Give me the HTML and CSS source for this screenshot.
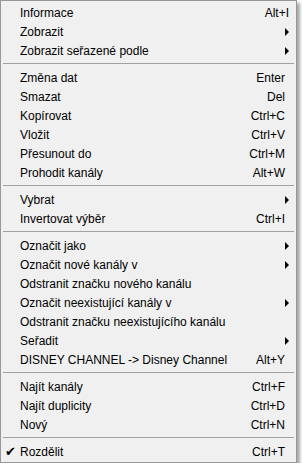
FILE: index.html
```html
<!DOCTYPE html>
<html lang="cs">
<head>
<meta charset="utf-8">
<link rel="stylesheet" href="styles.css">
</head>
<body>
<div class="menu">
  <div class="item"><span class="label">Informace</span><span class="key key-wide">Alt+I</span></div>
  <div class="item"><span class="label">Zobrazit</span><span class="sub"></span></div>
  <div class="item"><span class="label">Zobrazit seřazené podle</span><span class="sub"></span></div>
  <div class="sep"></div>
  <div class="item"><span class="label">Změna dat</span><span class="key">Enter</span></div>
  <div class="item"><span class="label">Smazat</span><span class="key">Del</span></div>
  <div class="item"><span class="label">Kopírovat</span><span class="key">Ctrl+C</span></div>
  <div class="item"><span class="label">Vložit</span><span class="key">Ctrl+V</span></div>
  <div class="item"><span class="label">Přesunout do</span><span class="key">Ctrl+M</span></div>
  <div class="item"><span class="label">Prohodit kanály</span><span class="key">Alt+W</span></div>
  <div class="sep"></div>
  <div class="item"><span class="label">Vybrat</span><span class="sub"></span></div>
  <div class="item"><span class="label">Invertovat výběr</span><span class="key">Ctrl+I</span></div>
  <div class="sep"></div>
  <div class="item"><span class="label">Označit jako</span><span class="sub"></span></div>
  <div class="item"><span class="label">Označit nové kanály v</span><span class="sub"></span></div>
  <div class="item"><span class="label">Odstranit značku nového kanálu</span></div>
  <div class="item"><span class="label">Označit neexistující kanály v</span><span class="sub"></span></div>
  <div class="item"><span class="label">Odstranit značku neexistujícího kanálu</span></div>
  <div class="item"><span class="label">Seřadit</span><span class="sub"></span></div>
  <div class="item"><span class="label">DISNEY CHANNEL -&gt; Disney Channel</span><span class="key">Alt+Y</span></div>
  <div class="sep"></div>
  <div class="item"><span class="label">Najít kanály</span><span class="key">Ctrl+F</span></div>
  <div class="item"><span class="label">Najít duplicity</span><span class="key">Ctrl+D</span></div>
  <div class="item"><span class="label">Nový</span><span class="key">Ctrl+N</span></div>
  <div class="sep"></div>
  <div class="item checked"><span class="check">✔</span><span class="label">Rozdělit</span><span class="key">Ctrl+T</span></div>
</div>
</body>
</html>
```
FILE: styles.css
```css
html, body {
  margin: 0;
  padding: 0;
  background: #ffffff;
}

body {
  font-family: "Liberation Sans", Arial, sans-serif;
  font-size: 12px;
  color: #000000;
}

.menu {
  box-sizing: border-box;
  width: 297px;
  background: #f0f0f0;
  border: 1px solid #979797;
  padding: 2px 0 1px 0;
  box-shadow: 3px 3px 3px rgba(0, 0, 0, 0.35);
}

.item {
  position: relative;
  display: flex;
  align-items: center;
  height: 19px;
  padding: 0 7px 0 19px;
  white-space: nowrap;
}

.label {
  flex: 1;
}

.key {
  margin-right: 4px;
}

.key-wide {
  margin-right: 0;
}

.sub {
  width: 0;
  height: 0;
  border-left: 4px solid #000000;
  border-top: 4px solid transparent;
  border-bottom: 4px solid transparent;
}

.sep {
  height: 1px;
  margin: 3px 2px 4px 2px;
  background: #a0a0a0;
}

.check {
  position: absolute;
  left: 4px;
  top: 1px;
  font-family: "DejaVu Sans", sans-serif;
  font-size: 13px;
  line-height: 17px;
}
```
